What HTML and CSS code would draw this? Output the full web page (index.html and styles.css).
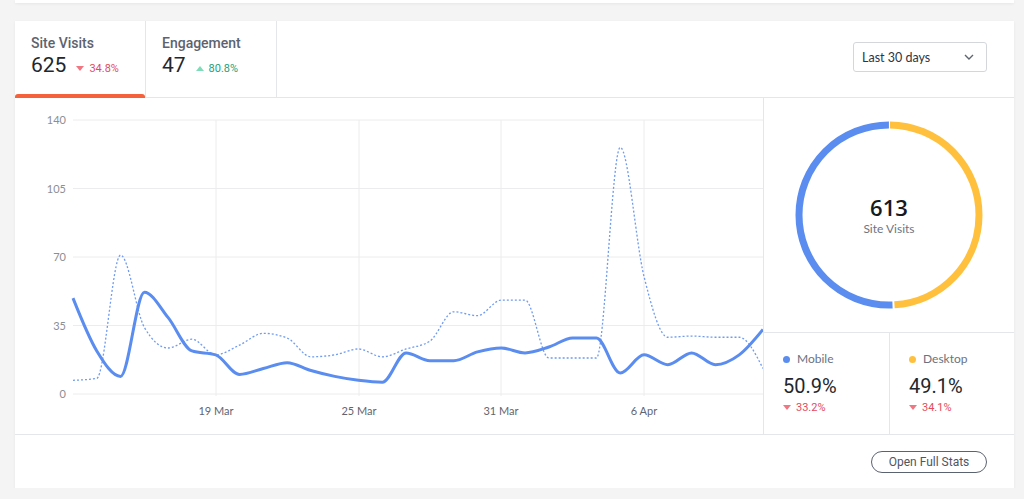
FILE: index.html
```html
<!DOCTYPE html>
<html lang="en">
    <head>
        <meta charset="UTF-8" />
        <meta name="viewport" content="width=device-width, initial-scale=1.0" />
        <title>Site Visits</title>
        <link rel="stylesheet" href="styles.css">
    </head>
    <body>
        <div class="top-card"></div>
        <section class="card">
            <header class="card-head">
                <div class="tab active">
                    <div class="tab-title">Site Visits</div>
                    <div class="tab-value">
                        <span class="num">625</span>
                        <span class="delta down">34.8%</span>
                    </div>
                </div>
                <div class="tab">
                    <div class="tab-title">Engagement</div>
                    <div class="tab-value">
                        <span class="num">47</span>
                        <span class="delta up">80.8%</span>
                    </div>
                </div>
                <div class="select">
                    <span>Last 30 days</span>
                    <svg width="10" height="6" viewBox="0 0 10 6"><path d="M1 1 L5 5 L9 1" fill="none" stroke="#5f6570" stroke-width="1.4"/></svg>
                </div>
            </header>
            <div class="card-body">
                <div class="chart">
                    <svg id="chart" width="748" height="336" viewBox="0 0 748 336">
                        <g class="grid">
                            <line x1="58" y1="22" x2="748" y2="22"/>
                            <line x1="58" y1="90.5" x2="748" y2="90.5"/>
                            <line x1="58" y1="159" x2="748" y2="159"/>
                            <line x1="58" y1="227.5" x2="748" y2="227.5"/>
                            <line x1="58" y1="296" x2="748" y2="296"/>
                            <line x1="201" y1="22" x2="201" y2="298"/>
                            <line x1="344" y1="22" x2="344" y2="298"/>
                            <line x1="486" y1="22" x2="486" y2="298"/>
                            <line x1="629" y1="22" x2="629" y2="298"/>
                        </g>
                        <g class="y-labels">
                            <text x="51" y="26">140</text>
                            <text x="51" y="94.5">105</text>
                            <text x="51" y="163">70</text>
                            <text x="51" y="231.5">35</text>
                            <text x="51" y="300">0</text>
                        </g>
                        <g class="x-labels">
                            <text x="201" y="317">19 Mar</text>
                            <text x="344" y="317">25 Mar</text>
                            <text x="486" y="317">31 Mar</text>
                            <text x="629" y="317">6 Apr</text>
                        </g>
                        <path id="prev" class="line-prev" d=""/>
                        <path id="curr" class="line-curr" d=""/>
                    </svg>
                </div>
                <aside class="side">
                    <div class="donut">
                        <svg width="188" height="188" viewBox="0 0 188 188">
                            <circle class="arc-desktop" cx="94" cy="94" r="90" transform="rotate(-90 94 94)"
                                stroke-dasharray="275.7 565.5" stroke-dashoffset="-1"/>
                            <circle class="arc-mobile" cx="94" cy="94" r="90" transform="rotate(-90 94 94)"
                                stroke-dasharray="285.8 565.5" stroke-dashoffset="-278.7"/>
                        </svg>
                        <div class="donut-text">
                            <div class="donut-num">613</div>
                            <div class="donut-label">Site Visits</div>
                        </div>
                    </div>
                    <div class="legend">
                        <div class="legend-item">
                            <div class="legend-label"><span class="dot mobile"></span>Mobile</div>
                            <div class="legend-value">50.9%</div>
                            <div class="delta down">33.2%</div>
                        </div>
                        <div class="legend-item">
                            <div class="legend-label"><span class="dot desktop"></span>Desktop</div>
                            <div class="legend-value">49.1%</div>
                            <div class="delta down">34.1%</div>
                        </div>
                    </div>
                </aside>
            </div>
            <footer class="card-foot">
                <button class="btn-outline">Open Full Stats</button>
            </footer>
        </section>
        <script>
        const visits = [49, 22, 9, 52, 39, 22, 20, 10, 13, 16, 12, 9, 7, 6, 21, 17, 17, 21.5, 23.5, 21, 24, 28.6, 28.6, 10.7, 20, 15, 21, 15, 20, 33];
        const previous = [7, 8, 71, 34, 23.5, 28, 20, 25, 31, 28.6, 19, 20, 23, 19, 23, 27, 42, 40, 48, 48, 18.4, 18.4, 18.4, 126, 60, 29, 29.6, 29, 29, 13];

        const x0 = 58;
        const step = 690 / 29;
        const base = 296;
        const k = 274 / 140;

        // monotone cubic, same idea as d3.curveMonotoneX
        function linePath(vals) {
            const n = vals.length;
            const pts = vals.map((v, i) => [x0 + i * step, base - v * k]);
            const s = [];
            for (let i = 0; i < n - 1; i++) {
                s.push((pts[i + 1][1] - pts[i][1]) / step);
            }
            const t = new Array(n).fill(0);
            for (let i = 1; i < n - 1; i++) {
                const a = s[i - 1];
                const b = s[i];
                const p = (a + b) / 2;
                t[i] = (Math.sign(a) + Math.sign(b)) * Math.min(Math.abs(a), Math.abs(b), 0.5 * Math.abs(p)) || 0;
            }
            t[0] = (3 * s[0] - t[1]) / 2;
            t[n - 1] = (3 * s[n - 2] - t[n - 2]) / 2;
            const h = step / 3;
            let d = `M${pts[0][0]},${pts[0][1]}`;
            for (let i = 0; i < n - 1; i++) {
                const [xa, ya] = pts[i];
                const [xb, yb] = pts[i + 1];
                d += ` C${xa + h},${ya + h * t[i]} ${xb - h},${yb - h * t[i + 1]} ${xb},${yb}`;
            }
            return d;
        }

        document.getElementById("curr").setAttribute("d", linePath(visits));
        document.getElementById("prev").setAttribute("d", linePath(previous));
        </script>
    </body>
</html>
```

FILE: styles.css
```css
* {
    padding: 0;
    margin: 0;
    box-sizing: border-box;
}
body {
    background-color: #f4f4f5;
    font-family: Roboto, "Liberation Sans", sans-serif;
    color: #23272d;
}

/* cards */
.top-card {
    height: 3px;
    width: 999px;
    margin-left: 15px;
    background-color: #fff;
    box-shadow: 0 1px 3px rgba(0, 0, 0, 0.06);
}
.card {
    width: 999px;
    margin: 18px 0 0 15px;
    background-color: #fff;
    box-shadow: 0 1px 3px rgba(0, 0, 0, 0.06);
}

/* header / tabs */
.card-head {
    display: flex;
    height: 77px;
    border-bottom: 1px solid #e4e6e9;
}
.tab {
    position: relative;
    width: 131px;
    padding: 14px 0 0 16px;
    border-right: 1px solid #e4e6e9;
}
.tab.active::after {
    content: "";
    position: absolute;
    left: 0;
    right: 0;
    bottom: -1px;
    height: 4px;
    background-color: #f5613b;
    border-radius: 3px 3px 0 0;
}
.tab-title {
    font-size: 14px;
    line-height: 17px;
    font-weight: 500;
    color: #5d636e;
}
.tab-value {
    display: flex;
    align-items: baseline;
    margin-top: 1px;
}
.num {
    font-size: 21px;
    line-height: 24px;
    color: #23272d;
}
.delta {
    font-size: 11px;
    line-height: 14px;
    margin-left: 10px;
}
.delta::before {
    content: "";
    display: inline-block;
    width: 0;
    height: 0;
    border-left: 4px solid transparent;
    border-right: 4px solid transparent;
    margin-right: 5px;
    vertical-align: 1px;
}
.delta.down {
    color: #e34c5b;
}
.delta.down::before {
    border-top: 5px solid #f07682;
}
.delta.up {
    color: #25a07c;
}
.delta.up::before {
    border-bottom: 5px solid #7fdcb9;
}

.select {
    display: flex;
    align-items: center;
    justify-content: space-between;
    width: 134px;
    height: 30px;
    margin: 21px 27px 0 auto;
    padding: 0 12px 0 8px;
    border: 1px solid #d3d7dc;
    border-radius: 3px;
    font-family: Lato, "Open Sans", sans-serif;
    font-size: 12.5px;
    color: #2e3440;
}

/* body */
.card-body {
    display: flex;
    height: 336px;
}
.chart {
    width: 749px;
    border-right: 1px solid #e4e6e9;
}
.chart svg {
    display: block;
}
.grid line {
    stroke: #ececee;
    stroke-width: 1;
}
.y-labels text,
.x-labels text {
    font-family: Lato, "Open Sans", sans-serif;
    font-size: 11px;
}
.y-labels text {
    text-anchor: end;
    fill: #8b8e94;
}
.x-labels text {
    text-anchor: middle;
    fill: #5f6570;
}
.line-curr {
    fill: none;
    stroke: #5a8def;
    stroke-width: 3;
    stroke-linejoin: round;
}
.line-prev {
    fill: none;
    stroke: #6f9bf0;
    stroke-width: 1.3;
    stroke-dasharray: 2 2;
}

/* donut side */
.side {
    width: 250px;
    display: flex;
    flex-direction: column;
}
.donut {
    height: 234px;
    display: grid;
    place-items: center;
}
.donut svg,
.donut-text {
    grid-area: 1 / 1;
}
.donut circle {
    fill: none;
    stroke-width: 7;
}
.arc-desktop {
    stroke: #ffc13d;
}
.arc-mobile {
    stroke: #5a8def;
}
.donut-text {
    text-align: center;
}
.donut-num {
    font-family: "Open Sans", sans-serif;
    font-size: 22px;
    line-height: 26px;
    font-weight: 600;
    color: #16191d;
}
.donut-label {
    margin-top: 1px;
    font-family: Lato, "Open Sans", sans-serif;
    font-size: 12px;
    line-height: 16px;
    color: #6e7580;
}

.legend {
    display: flex;
    height: 102px;
    border-top: 1px solid #e4e6e9;
}
.legend-item {
    width: 125px;
    padding: 18px 0 0 19px;
}
.legend-item + .legend-item {
    border-left: 1px solid #e4e6e9;
}
.legend-label {
    display: flex;
    align-items: center;
    font-family: Lato, "Open Sans", sans-serif;
    font-size: 12px;
    line-height: 16px;
    color: #6b7280;
}
.dot {
    width: 7px;
    height: 7px;
    border-radius: 50%;
    margin-right: 7px;
}
.dot.mobile {
    background-color: #5a8def;
}
.dot.desktop {
    background-color: #ffc13d;
}
.legend-value {
    margin-top: 7px;
    font-size: 20px;
    line-height: 24px;
    color: #23272d;
}
.legend-item .delta {
    margin: 3px 0 0 0;
}

/* footer */
.card-foot {
    display: flex;
    justify-content: flex-end;
    align-items: center;
    height: 54px;
    padding-right: 27px;
    border-top: 1px solid #e4e6e9;
}
.btn-outline {
    width: 116px;
    height: 22px;
    border: 1px solid #5b6270;
    border-radius: 11px;
    background-color: #fff;
    font-family: Roboto, sans-serif;
    font-size: 12px;
    color: #4f5663;
}
```
